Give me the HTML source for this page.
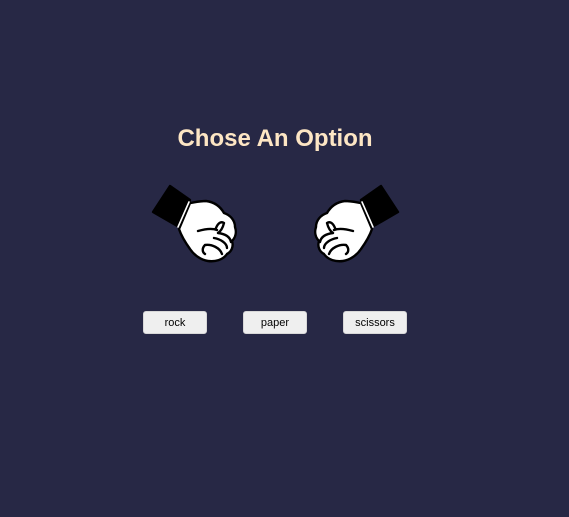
<!DOCTYPE html>
<html><head><style>
html,body{margin:0;padding:0;width:569px;height:517px;background:#272845;overflow:hidden;font-family:"Liberation Sans",Arial,sans-serif}
h1{position:absolute;top:125px;left:0;width:550px;text-align:center;margin:0;font-size:24px;font-weight:bold;color:#fde6c4}
svg{position:absolute}
.b{position:absolute;top:311px;width:62px;height:21px;background:#efefef;border:1px solid #d8d8d8;border-radius:3px;font-size:11px;line-height:22px;text-align:center;color:#000}
</style></head><body>
<h1>Chose An Option</h1>
<svg width="95" height="85" viewBox="0 0 95 85" style="left:148px;top:182px">
<g id="f" stroke="#000" stroke-width="2.4" stroke-linejoin="round" stroke-linecap="round">
<polygon points="22,4 42,18 31,45 5,30" fill="#000"/>
<path d="M42,21 C48,20 52,19 58,19 C66,20 72,24 76,31 C82,33 87,38 87,45 C89,51 87,56 84,59 C86,65 83,70 79,72 C75,78 67,80 60,79 C53,78 46,73 42,67 C37,60 33,53 31,47 Z" fill="#fff"/>
<path d="M41,20 L30,45" stroke="#fff" stroke-width="1.6"/>
<path d="M50,49 C57,47 64,46 69,48 M68,46 C70,41 73,39 76,41 C75,45 73,49 70,51 M70,51 C78,52 82,55 83,60 M66,56 C72,57 79,61 79,66 M57,63 C64,62 72,66 74,72 M57,63 C54,66 54,70 57,72" fill="none"/>
</g></svg>
<svg width="95" height="85" viewBox="0 0 95 85" style="left:308px;top:182px;transform:scaleX(-1)">
<use href="#f"/></svg>
<div class="b" style="left:143px">rock</div>
<div class="b" style="left:243px">paper</div>
<div class="b" style="left:343px">scissors</div>
</body></html>
